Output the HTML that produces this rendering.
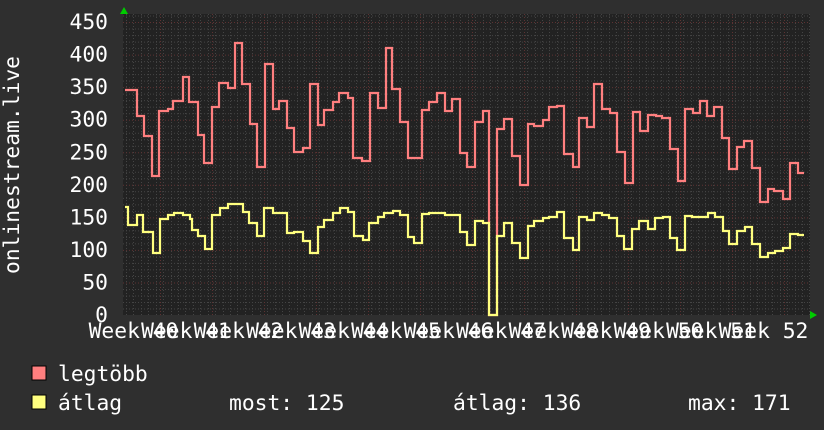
<!DOCTYPE html>
<html><head><meta charset="utf-8"><style>
html,body{margin:0;padding:0;background:#2f2f2f;}
svg{display:block;}
text{font-family:"DejaVu Sans Mono","Liberation Mono",monospace;fill:#fff;font-size:21.3px;}
</style></head><body>
<svg id="s" width="824" height="430" viewBox="0 0 824 430" xmlns="http://www.w3.org/2000/svg">
<rect width="824" height="430" fill="#2f2f2f"/>
<rect x="123" y="14" width="687" height="301" fill="#222"/>
<g id="grid"></g>
<path fill="none" stroke="#ff7f7f" stroke-width="2.2" d="M125 90 H137 V116 H144 V136 H152 V176 H159 V111 H168 V109 H173 V101 H183 V77 H189 V102 H198 V135 H204 V163 H212 V107 H219 V83 H228 V88 H235 V43 H242 V84 H250 V124 H257 V167 H265 V64 H273 V109 H279 V101 H287 V128 H294 V152 H303 V148 H310 V84 H318 V125 H324 V110 H333 V102 H339 V93 H348 V98 H353 V158 H362 V161 H370 V93 H378 V108 H386 V48 H392 V89 H400 V122 H408 V158 H422 V110 H429 V102 H437 V93 H445 V111 H452 V99 H460 V153 H467 V167 H475 V122 H483 V111 H489 V315 H497 V129 H504 V119 H512 V156 H520 V185 H528 V124 H534 V126 H543 V120 H549 V107 H557 V106 H564 V154 H573 V167 H579 V118 H587 V127 H594 V84 H602 V109 H610 V113 H617 V152 H625 V183 H633 V112 H640 V131 H648 V115 H656 V116 H662 V118 H670 V149 H678 V181 H685 V109 H693 V113 H700 V101 H707 V116 H714 V107 H722 V138 H729 V169 H737 V147 H744 V141 H752 V168 H760 V202 H768 V189 H774 V191 H783 V199 H790 V163 H798 V173 H804"/>
<path fill="none" stroke="#ffff7f" stroke-width="2.2" d="M125 207 H128 V225 H137 V215 H143 V232 H153 V253 H160 V219 H168 V215 H174 V213 H183 V215 H190 V219 H192 V230 H198 V236 H205 V249 H212 V215 H220 V208 H228 V204 H243 V212 H249 V223 H257 V236 H264 V208 H273 V213 H287 V233 H294 V232 H303 V241 H310 V253 H318 V227 H324 V220 H333 V213 H340 V208 H348 V212 H354 V236 H363 V240 H369 V223 H378 V217 H384 V213 H393 V211 H400 V215 H408 V237 H414 V243 H422 V214 H429 V213 H437 V213 H445 V215 H460 V232 H467 V245 H475 V221 H483 V223 H489 V315 H497 V236 H504 V223 H512 V243 H520 V258 H528 V226 H534 V221 H543 V218 H549 V217 H557 V212 H564 V238 H573 V250 H579 V217 H587 V220 H594 V213 H602 V215 H609 V218 H617 V236 H624 V249 H632 V229 H639 V221 H648 V229 H655 V218 H663 V217 H670 V238 H677 V250 H685 V216 H692 V217 H708 V213 H715 V217 H723 V231 H729 V244 H737 V231 H745 V227 H752 V244 H760 V257 H768 V253 H775 V251 H783 V248 H790 V234 H798 V235 H804"/>
<polygon points="120,14 128,14 124,7" fill="#0c0"/>
<polygon points="810,311 810,319 817,315" fill="#0c0"/>
<g id="ylab" text-anchor="end"></g>
<g id="xlab" text-anchor="middle"></g>
<text transform="translate(19,165) rotate(-90)" text-anchor="middle">onlinestream.live</text>
<rect x="32" y="366" width="14" height="14" fill="#ff7f7f" stroke="#000" stroke-width="1"/>
<rect x="32" y="395" width="14" height="14" fill="#ffff7f" stroke="#000" stroke-width="1"/>
<text x="58" y="381">legtöbb</text>
<text x="58" y="410">átlag</text>
<text x="229" y="410">most: 125</text>
<text x="453" y="410">átlag: 136</text>
<text x="688" y="410">max: 171</text>
</svg>
<script>
var NS="http://www.w3.org/2000/svg",g=document.getElementById('grid');
function ln(x1,y1,x2,y2,c){var l=document.createElementNS(NS,'line');l.setAttribute('x1',x1);l.setAttribute('y1',y1);l.setAttribute('x2',x2);l.setAttribute('y2',y2);l.setAttribute('stroke',c);l.setAttribute('stroke-width','1');l.setAttribute('stroke-dasharray','1,2');g.appendChild(l);}
function Y(v){return 315-0.651*v;}
for(var v=10;v<=460;v+=10){if(v%50)ln(123,Y(v)+0.5,810,Y(v)+0.5,'#444');}
for(var x=123+3;x<810;x+=52/7){ln(Math.round(x)+0.5,14,Math.round(x)+0.5,315,'#444');}
for(var v=50;v<=450;v+=50)ln(123,Y(v)+0.5,810,Y(v)+0.5,'#5e3232');
for(var x=160;x<810;x+=52)ln(x+0.5,14,x+0.5,315,'#5e3232');
var yl=document.getElementById('ylab');
for(var v=0;v<=450;v+=50){var t=document.createElementNS(NS,'text');t.setAttribute('x',108);t.setAttribute('y',Y(v)+7);t.textContent=v;yl.appendChild(t);}
var xl=document.getElementById('xlab');
for(var i=0;i<13;i++){var t=document.createElementNS(NS,'text');t.setAttribute('x',133.5+52.5*i);t.setAttribute('y',338);t.textContent='Week '+(40+i);xl.appendChild(t);}
</script>
</body></html>
